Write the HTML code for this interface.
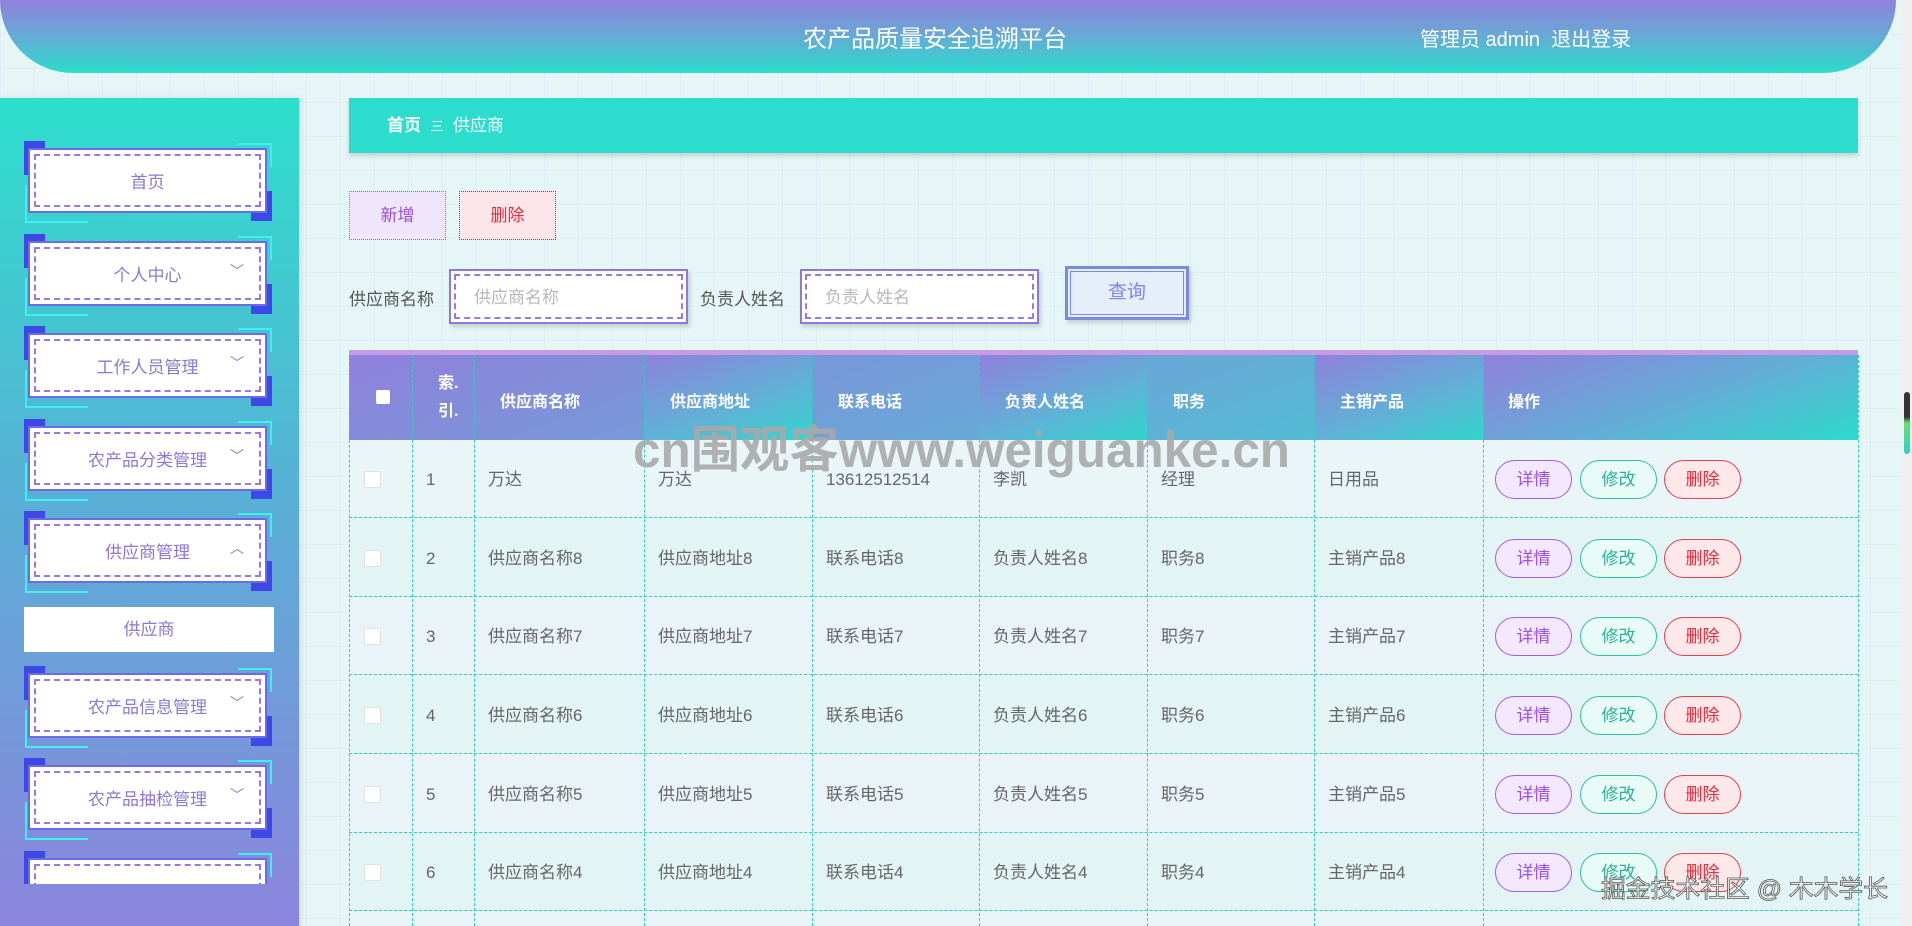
<!DOCTYPE html>
<html style="width:1912px;height:926px;overflow:hidden"><head><meta charset="utf-8">
<style>
*{margin:0;padding:0;box-sizing:border-box}
body{width:1912px;height:926px;overflow:hidden;position:relative;font-family:"Liberation Sans","Noto Sans CJK SC",sans-serif;
background:#e6f5f5;
background-image:linear-gradient(rgba(200,215,235,.25) 1px,transparent 1px),linear-gradient(90deg,rgba(200,215,235,.25) 1px,transparent 1px);background-size:34px 34px}
.abs{position:absolute}
.hdr{left:0;top:0;width:1896px;height:73px;border-radius:0 0 73px 73px;background:linear-gradient(#9080dc,#6aa6d6 45%,#2cdccc)}
.title{left:760px;top:19px;width:350px;text-align:center;color:#fff;font-size:24px}
.user{left:1420px;top:23px;color:#fff;font-size:20px}
.side{left:0;top:98px;width:299px;height:828px;background:linear-gradient(#2ddfcc,#5aaed6 50%,#8d84de);box-shadow:2px 0 6px rgba(0,0,0,.1)}
.item{position:absolute;left:0;width:299px;height:92px}
.item .bl1{position:absolute;left:24px;top:0;width:21px;height:34px;background:#3e48e6}
.item .bl2{position:absolute;left:251px;top:50px;width:21px;height:30px;background:#3e48e6}
.item .cl{position:absolute;left:25px;top:44px;width:63px;height:38px;border-left:2px solid #3ff0f0;border-bottom:2px solid #3ff0f0}
.item .cr{position:absolute;left:238px;top:2px;width:34px;height:24px;border-top:2px solid #3ff0f0;border-right:2px solid #3ff0f0}
.item .box{position:absolute;left:28px;top:7px;width:239px;height:65px;background:#fff;border:2px solid #6b6ae8}
.item .in{position:absolute;left:4px;top:4px;right:4px;bottom:4px;border:2px dashed #9a78dc;color:#8c78d2;font-size:17px;display:flex;align-items:center;justify-content:center}
.item .chev{position:absolute;left:200px;top:18px;color:#8c78d2;font-size:14px}
.crumb{left:349px;top:98px;width:1509px;height:55px;background:#2cdccc;box-shadow:0 3px 5px rgba(0,0,0,.15);color:#fff;font-size:17px;line-height:55px;padding-left:38px}
.btn{height:49px;width:97px;text-align:center;line-height:47px;font-size:17px}
.lbl{color:#555;font-size:17px;top:285px}
.inp{top:269px;width:239px;height:55px;background:#fff;border:2px solid #8b7ad8;box-shadow:2px 3px 4px rgba(0,0,0,.15);padding:3px}
.inp div{border:2px dashed #9a78dc;height:100%;color:#b8b8b8;font-size:17px;line-height:43px;padding-left:18px}
.th{top:355px;height:85px;background:linear-gradient(160deg,#9080dc,#62aed6 55%,#2ddacb)}
.thtxt{color:#fff;font-weight:bold;font-size:16px;top:388px}
.row{left:349px;width:1509px;height:78px;border-bottom:1px dashed #2ccfbf}
.cell{position:absolute;color:#666;font-size:17px;top:0;line-height:79px}
.vl{position:absolute;top:355px;height:571px;border-left:1px dashed #2ccfbf}
.ab{position:absolute;width:77px;height:39px;border-radius:20px;text-align:center;line-height:37px;font-size:17px}
.b1{border:1px solid #a060e0;color:#9a50e0;background:#f4e8ff}
.b2{border:1px solid #2cc0a0;color:#2cb09a;background:#e8fbf6}
.b3{border:1px solid #e04050;color:#e03040;background:#ffe8ea}
.cb{position:absolute;width:17px;height:17px;background:#fff;border-radius:2px;border:1px solid #e0e0e0;top:31px;left:364px}
.r{position:absolute;left:0;width:1912px;height:79px}
</style></head><body>
<div class="abs hdr"></div>
<div class="abs title">农产品质量安全追溯平台</div>
<div class="abs user">管理员 admin &nbsp;退出登录</div>
<div class="abs" style="left:1902px;top:0;width:10px;height:926px;background:#f0f0f0"></div>
<div class="abs" style="left:1904px;top:392px;width:6px;height:62px;border-radius:3px;background:linear-gradient(#333 40%,#6ce070 50%,#2ad0d0)"></div>

<div class="abs side">
 <div style="position:absolute;left:0;top:0;width:299px;height:786px;overflow:hidden">
 <div class="item" style="top:43px"><div class="cl"></div><div class="cr"></div><div class="bl1"></div><div class="bl2"></div><div class="box"><div class="in">首页</div></div></div>
 <div class="item" style="top:136px"><div class="cl"></div><div class="cr"></div><div class="bl1"></div><div class="bl2"></div><div class="box"><div class="in">个人中心</div><div class="chev">﹀</div></div></div>
 <div class="item" style="top:228px"><div class="cl"></div><div class="cr"></div><div class="bl1"></div><div class="bl2"></div><div class="box"><div class="in">工作人员管理</div><div class="chev">﹀</div></div></div>
 <div class="item" style="top:321px"><div class="cl"></div><div class="cr"></div><div class="bl1"></div><div class="bl2"></div><div class="box"><div class="in">农产品分类管理</div><div class="chev">﹀</div></div></div>
 <div class="item" style="top:413px"><div class="cl"></div><div class="cr"></div><div class="bl1"></div><div class="bl2"></div><div class="box"><div class="in">供应商管理</div><div class="chev">︿</div></div></div>
 <div style="position:absolute;left:24px;top:509px;width:250px;height:45px;background:#fff;color:#8c78d2;font-size:17px;text-align:center;line-height:45px">供应商</div>
 <div class="item" style="top:568px"><div class="cl"></div><div class="cr"></div><div class="bl1"></div><div class="bl2"></div><div class="box"><div class="in">农产品信息管理</div><div class="chev">﹀</div></div></div>
 <div class="item" style="top:660px"><div class="cl"></div><div class="cr"></div><div class="bl1"></div><div class="bl2"></div><div class="box"><div class="in">农产品抽检管理</div><div class="chev">﹀</div></div></div>
 <div class="item" style="top:753px"><div class="cl"></div><div class="cr"></div><div class="bl1"></div><div class="bl2"></div><div class="box"><div class="in"></div></div></div>
 </div>
</div>

<div class="abs crumb"><b>首页</b>&nbsp; <span style="font-size:13px">三</span> &nbsp;供应商</div>
<div class="abs btn" style="left:349px;top:191px;border:1px dotted #9a60e0;background:#f0e6fc;color:#9a50e0">新增</div>
<div class="abs btn" style="left:459px;top:191px;border:1px dotted #d02050;background:#fde6ea;color:#e03040">删除</div>
<div class="abs lbl" style="left:349px">供应商名称</div>
<div class="abs inp" style="left:449px"><div>供应商名称</div></div>
<div class="abs lbl" style="left:700px">负责人姓名</div>
<div class="abs inp" style="left:800px"><div>负责人姓名</div></div>
<div class="abs" style="left:1065px;top:266px;width:124px;height:54px;border:3px solid #7b8ae0;outline:1px solid #7b8ae0;outline-offset:-6px;background:#e6eefa;color:#7b8ae0;font-size:19px;text-align:center;line-height:48px;box-shadow:2px 3px 4px rgba(0,0,0,.15)">查询</div>

<div class="abs" style="left:349px;top:350px;width:1509px;height:5px;background:#c79ae6"></div>
<div class="abs th" style="left:349px;width:1509px"></div>
<div class="abs" style="left:644px;top:355px;width:168px;height:85px;background:linear-gradient(160deg,#9080dc,#5fb2d6 60%,#30d6cc)"></div>
<div class="abs" style="left:979px;top:355px;width:168px;height:85px;background:linear-gradient(160deg,#9080dc,#5fb2d6 60%,#30d6cc)"></div>
<div class="abs" style="left:1314px;top:355px;width:169px;height:85px;background:linear-gradient(160deg,#9080dc,#5fb2d6 60%,#30d6cc)"></div>
<div class="abs" style="left:1483px;top:355px;width:375px;height:85px;background:linear-gradient(160deg,#9080dc,#62aed6 55%,#2ddacb)"></div>
<div class="abs" style="left:376px;top:390px;width:14px;height:14px;background:#fff;border-radius:2px"></div>
<div class="abs thtxt" style="left:438px;top:370px;line-height:28px">索.<br>引.</div>
<div class="abs thtxt" style="left:500px">供应商名称</div>
<div class="abs thtxt" style="left:670px">供应商地址</div>
<div class="abs thtxt" style="left:838px">联系电话</div>
<div class="abs thtxt" style="left:1005px">负责人姓名</div>
<div class="abs thtxt" style="left:1173px">职务</div>
<div class="abs thtxt" style="left:1340px">主销产品</div>
<div class="abs thtxt" style="left:1508px">操作</div>

<div class="abs row" style="top:440px;background:#eaf5f8"></div>
<div class="abs row" style="top:519px;background:#e2f4f3"></div>
<div class="abs row" style="top:597px;background:#eaf3f8"></div>
<div class="abs row" style="top:676px;background:#e2f4f3"></div>
<div class="abs row" style="top:755px;background:#eaf3f8"></div>
<div class="abs row" style="top:833px;background:#e2f4f3"></div>
<div class="abs" style="left:349px;top:912px;width:1509px;height:14px;background:#eaf3f8"></div>

<div class="vl" style="left:349px"></div><div class="vl" style="left:412px"></div><div class="vl" style="left:474px"></div><div class="vl" style="left:644px"></div><div class="vl" style="left:812px"></div><div class="vl" style="left:979px"></div><div class="vl" style="left:1147px"></div><div class="vl" style="left:1314px"></div><div class="vl" style="left:1483px"></div><div class="vl" style="left:1858px"></div>

<div style="position:absolute;left:0;top:440px;width:1912px;height:472px">
 <div class="r" style="top:0">
  <div class="cb"></div><div class="cell" style="left:426px">1</div><div class="cell" style="left:488px">万达</div><div class="cell" style="left:658px">万达</div><div class="cell" style="left:826px">13612512514</div><div class="cell" style="left:993px">李凯</div><div class="cell" style="left:1161px">经理</div><div class="cell" style="left:1328px">日用品</div>
  <div class="ab b1" style="left:1495px;top:20px">详情</div><div class="ab b2" style="left:1580px;top:20px">修改</div><div class="ab b3" style="left:1664px;top:20px">删除</div>
 </div>
 <div class="r" style="top:79px">
  <div class="cb"></div><div class="cell" style="left:426px">2</div><div class="cell" style="left:488px">供应商名称8</div><div class="cell" style="left:658px">供应商地址8</div><div class="cell" style="left:826px">联系电话8</div><div class="cell" style="left:993px">负责人姓名8</div><div class="cell" style="left:1161px">职务8</div><div class="cell" style="left:1328px">主销产品8</div>
  <div class="ab b1" style="left:1495px;top:20px">详情</div><div class="ab b2" style="left:1580px;top:20px">修改</div><div class="ab b3" style="left:1664px;top:20px">删除</div>
 </div>
 <div class="r" style="top:157px">
  <div class="cb"></div><div class="cell" style="left:426px">3</div><div class="cell" style="left:488px">供应商名称7</div><div class="cell" style="left:658px">供应商地址7</div><div class="cell" style="left:826px">联系电话7</div><div class="cell" style="left:993px">负责人姓名7</div><div class="cell" style="left:1161px">职务7</div><div class="cell" style="left:1328px">主销产品7</div>
  <div class="ab b1" style="left:1495px;top:20px">详情</div><div class="ab b2" style="left:1580px;top:20px">修改</div><div class="ab b3" style="left:1664px;top:20px">删除</div>
 </div>
 <div class="r" style="top:236px">
  <div class="cb"></div><div class="cell" style="left:426px">4</div><div class="cell" style="left:488px">供应商名称6</div><div class="cell" style="left:658px">供应商地址6</div><div class="cell" style="left:826px">联系电话6</div><div class="cell" style="left:993px">负责人姓名6</div><div class="cell" style="left:1161px">职务6</div><div class="cell" style="left:1328px">主销产品6</div>
  <div class="ab b1" style="left:1495px;top:20px">详情</div><div class="ab b2" style="left:1580px;top:20px">修改</div><div class="ab b3" style="left:1664px;top:20px">删除</div>
 </div>
 <div class="r" style="top:315px">
  <div class="cb"></div><div class="cell" style="left:426px">5</div><div class="cell" style="left:488px">供应商名称5</div><div class="cell" style="left:658px">供应商地址5</div><div class="cell" style="left:826px">联系电话5</div><div class="cell" style="left:993px">负责人姓名5</div><div class="cell" style="left:1161px">职务5</div><div class="cell" style="left:1328px">主销产品5</div>
  <div class="ab b1" style="left:1495px;top:20px">详情</div><div class="ab b2" style="left:1580px;top:20px">修改</div><div class="ab b3" style="left:1664px;top:20px">删除</div>
 </div>
 <div class="r" style="top:393px">
  <div class="cb"></div><div class="cell" style="left:426px">6</div><div class="cell" style="left:488px">供应商名称4</div><div class="cell" style="left:658px">供应商地址4</div><div class="cell" style="left:826px">联系电话4</div><div class="cell" style="left:993px">负责人姓名4</div><div class="cell" style="left:1161px">职务4</div><div class="cell" style="left:1328px">主销产品4</div>
  <div class="ab b1" style="left:1495px;top:20px">详情</div><div class="ab b2" style="left:1580px;top:20px">修改</div><div class="ab b3" style="left:1664px;top:20px">删除</div>
 </div>
</div>

<svg class="abs" style="left:0;top:0" width="1912" height="926">
 <text x="633" y="467" textLength="657" lengthAdjust="spacingAndGlyphs" font-family="Liberation Sans,Noto Sans CJK SC,sans-serif" font-weight="bold" font-size="50" fill="#a8a8a8" fill-opacity="0.9">cn围观客www.weiguanke.cn</text>
 <text x="1601" y="897" textLength="287" lengthAdjust="spacingAndGlyphs" font-family="Liberation Sans,Noto Sans CJK SC,sans-serif" font-size="24" fill="#fff" stroke="#555" stroke-width="0.8">掘金技术社区 @ 木木学长</text>
</svg>
</body></html>
